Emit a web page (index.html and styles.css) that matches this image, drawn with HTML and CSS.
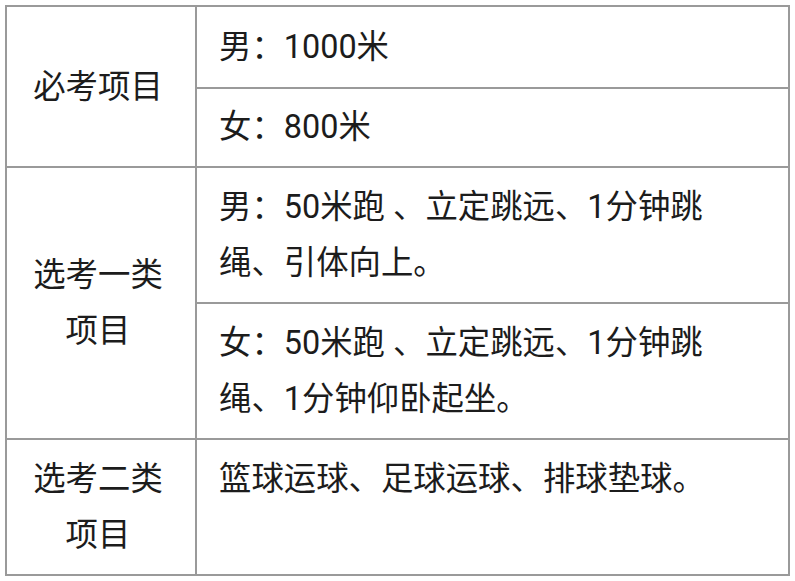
FILE: index.html
```html
<!DOCTYPE html>
<html lang="zh-CN">
<head>
<meta charset="utf-8">
<title>体育考试项目</title>
<link rel="stylesheet" href="styles.css">
</head>
<body>
<table class="exam">
  <colgroup>
    <col class="col-cat">
    <col class="col-item">
  </colgroup>
  <tbody>
    <tr class="first">
      <td class="cat" rowspan="2">必考项目</td>
      <td class="item">男：1000米</td>
    </tr>
    <tr class="second">
      <td class="item">女：800米</td>
    </tr>
    <tr>
      <td class="cat" rowspan="2">选考一类<br>项目</td>
      <td class="item">男：50米跑 、立定跳远、1分钟跳绳、引体向上。</td>
    </tr>
    <tr>
      <td class="item">女：50米跑 、立定跳远、1分钟跳绳、1分钟仰卧起坐。</td>
    </tr>
    <tr>
      <td class="cat">选考二类<br>项目</td>
      <td class="item top">篮球运球、足球运球、排球垫球。</td>
    </tr>
  </tbody>
</table>
</body>
</html>
```

FILE: styles.css
```css
html, body {
  margin: 0;
  padding: 0;
  background: #ffffff;
}

body {
  padding: 5px 0 0 5px;
  font-family: Roboto, "Noto Sans CJK SC", sans-serif;
  font-size: 32.4px;
  line-height: 56px;
  color: #1c1c1c;
}

.exam {
  border-collapse: collapse;
  table-layout: fixed;
  width: 785px;
}

.col-cat {
  width: 190px;
}

.exam td {
  border: 2px solid #9a9a9a;
  padding: 11px 0;
  vertical-align: middle;
}

.exam tr.first td.item {
  padding-top: 12px;
  padding-bottom: 12px;
}

.exam tr.second td.item {
  padding-top: 10px;
  padding-bottom: 11px;
}

.exam td.cat {
  text-align: center;
  padding-right: 6px;
}

.exam td.item {
  text-align: left;
  padding-left: 22px;
  padding-right: 72px;
}

.exam td.top {
  vertical-align: top;
}
```
